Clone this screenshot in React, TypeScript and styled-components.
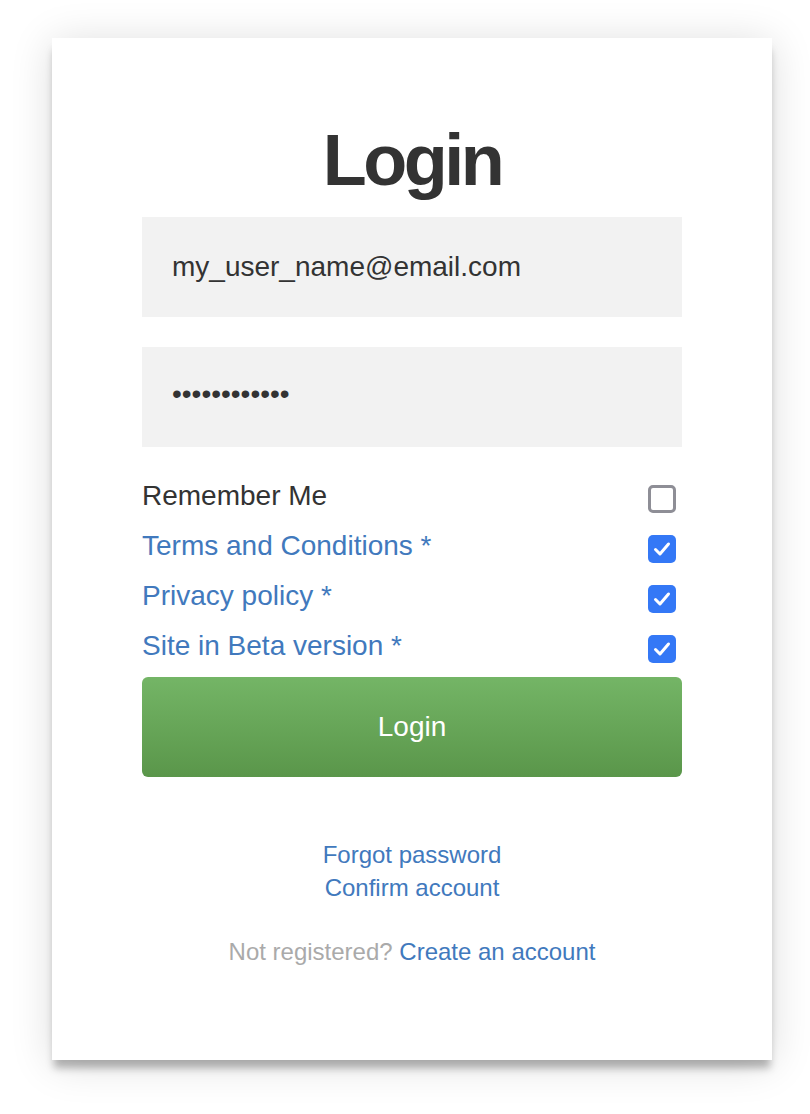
import React from "react";
import styled, { createGlobalStyle } from "styled-components";

const GlobalStyle = createGlobalStyle`
  html, body { margin: 0; padding: 0; background: #ffffff; }
  body { font-family: "Liberation Sans", Arial, Helvetica, sans-serif; }
  * { box-sizing: border-box; }
`;

const Page = styled.div`
  padding: 38px 38px 54px 52px;
`;

const Card = styled.div`
  width: 720px;
  height: 1022px;
  background: #ffffff;
  padding: 0 90px;
  box-shadow: 0 10px 8px -2px rgba(0, 0, 0, 0.28), 0 4px 40px rgba(0, 0, 0, 0.14);
  display: flex;
  flex-direction: column;
`;

const Title = styled.h1`
  margin: 86px 0 0;
  height: 72px;
  font-size: 72px;
  line-height: 72px;
  font-weight: 700;
  letter-spacing: -3.5px;
  color: #333333;
  text-align: center;
`;

const Field = styled.input<{ $top: number; $lift?: number }>`
  display: block;
  width: 100%;
  height: 100px;
  margin-top: ${(p) => p.$top}px;
  padding: 0 30px ${(p) => (p.$lift ? p.$lift * 2 : 0)}px;
  border: none;
  outline: none;
  background: #f2f2f2;
  font-family: "Liberation Sans", Arial, sans-serif;
  font-size: 28px;
  color: #333333;
`;

const Options = styled.div`
  margin-top: 24px;
  display: flex;
  flex-direction: column;
`;

const Row = styled.label<{ $link?: boolean }>`
  height: 50px;
  display: flex;
  align-items: center;
  justify-content: space-between;
  font-size: 28px;
  line-height: 50px;
  color: ${(p) => (p.$link ? "#4179bd" : "#333333")};
`;

const Box = styled.span<{ $checked?: boolean }>`
  width: 28px;
  height: 28px;
  margin: 6px 6px 0 0;
  border-radius: 5px;
  display: flex;
  align-items: center;
  justify-content: center;
  background: ${(p) => (p.$checked ? "#3478f6" : "#ffffff")};
  border: ${(p) => (p.$checked ? "none" : "3px solid #8e8e96")};
`;

const SubmitButton = styled.button`
  margin-top: 6px;
  width: 100%;
  height: 100px;
  border: none;
  border-radius: 6px;
  background: linear-gradient(to bottom, #74b566, #5a964a);
  color: #ffffff;
  font-family: "Liberation Sans", Arial, sans-serif;
  font-size: 28px;
  cursor: pointer;
`;

const Links = styled.div`
  margin-top: 61px;
  display: flex;
  flex-direction: column;
  align-items: center;
  font-size: 24px;
  line-height: 33px;
`;

const Link = styled.a`
  color: #4179bd;
  text-decoration: none;
`;

const Register = styled.div`
  margin-top: 31px;
  text-align: center;
  font-size: 24px;
  line-height: 33px;
  color: #aaaaaa;
`;

const Check = () => (
  <svg width="18" height="16" viewBox="0 0 18 16">
    <path
      d="M2.5 8.5 L7 13 L15.5 3"
      fill="none"
      stroke="#ffffff"
      strokeWidth="3"
      strokeLinecap="round"
      strokeLinejoin="round"
    />
  </svg>
);

const Checkbox = ({ checked }: { checked?: boolean }) => (
  <Box $checked={checked}>{checked && <Check />}</Box>
);

const options = [
  { label: "Remember Me", link: false, checked: false },
  { label: "Terms and Conditions *", link: true, checked: true },
  { label: "Privacy policy *", link: true, checked: true },
  { label: "Site in Beta version *", link: true, checked: true },
];

export default function App() {
  return (
    <>
      <GlobalStyle />
      <Page>
        <Card>
          <Title>Login</Title>
          <Field $top={21} type="text" defaultValue="my_user_name@email.com" />
          <Field $top={30} $lift={3} type="password" defaultValue="passwordpass" />
          <Options>
            {options.map((o) => (
              <Row key={o.label} $link={o.link}>
                <span>{o.label}</span>
                <Checkbox checked={o.checked} />
              </Row>
            ))}
          </Options>
          <SubmitButton>Login</SubmitButton>
          <Links>
            <Link href="#">Forgot password</Link>
            <Link href="#">Confirm account</Link>
          </Links>
          <Register>
            Not registered? <Link href="#">Create an account</Link>
          </Register>
        </Card>
      </Page>
    </>
  );
}
